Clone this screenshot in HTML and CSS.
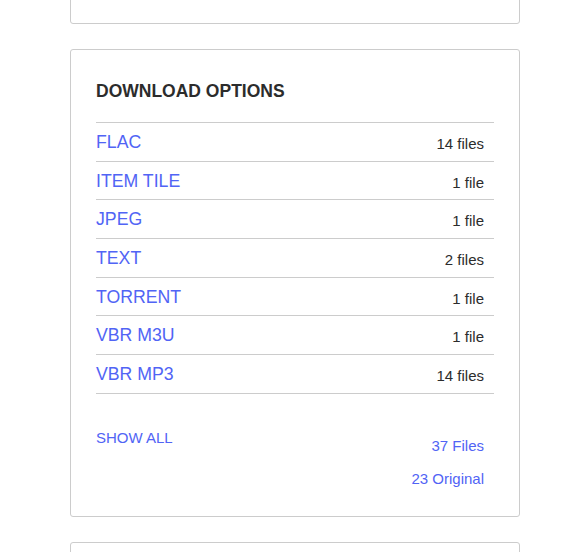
FILE: index.html
```html
<!DOCTYPE html>
<html lang="en">
<head>
  <meta charset="UTF-8">
  <title>Download Options</title>
  <link rel="stylesheet" href="styles.css">
</head>
<body>

  <div class="column">
    <!-- card above, scrolled off -->
    <div class="card card-top"></div>

    <!-- Download options -->
    <div class="card dl">
      <h3>DOWNLOAD OPTIONS</h3>
      <div class="formats">
        <div class="fmt"><a href="#">FLAC</a><span class="count">14 files</span></div>
        <div class="fmt"><a href="#">ITEM TILE</a><span class="count">1 file</span></div>
        <div class="fmt"><a href="#">JPEG</a><span class="count">1 file</span></div>
        <div class="fmt"><a href="#">TEXT</a><span class="count">2 files</span></div>
        <div class="fmt"><a href="#">TORRENT</a><span class="count">1 file</span></div>
        <div class="fmt"><a href="#">VBR M3U</a><span class="count">1 file</span></div>
        <div class="fmt"><a href="#">VBR MP3</a><span class="count">14 files</span></div>
      </div>
      <div class="dl-foot">
        <a class="show-all" href="#">SHOW ALL</a>
        <div class="totals">
          <a href="#">37 Files</a>
          <a href="#">23 Original</a>
        </div>
      </div>
    </div>

    <!-- next card -->
    <div class="card card-next"></div>
  </div>

</body>
</html>
```

FILE: styles.css
```css
body { margin: 0; background: #fff; font-family: "Liberation Sans", Arial, sans-serif; color: #2c2c2c; overflow: hidden; }
a { color: #5164f5; text-decoration: none; }
.column { width: 450px; margin-left: 70px; }
.card { border: 1px solid #ccc; border-radius: 3px; background: #fff; box-sizing: border-box; margin-bottom: 25px; }
.card-top { margin-top: -30px; height: 54px; }
.card-next { height: 60px; }

.dl { padding: 32px 25px 27px 25px; }
.dl h3 { margin: 0 0 22px; font-size: 17.5px; font-weight: bold; line-height: 18px; color: #2c2c2c; }

.formats { border-bottom: 1px solid #ccc; }
.fmt {
    display: flex;
    justify-content: space-between;
    align-items: flex-start;
    border-top: 1px solid #ccc;
    padding: 7px 10px 6.7px 0;
}
.fmt a { font-size: 17.7px; line-height: 24px; }
.count { font-size: 15px; line-height: 21px; padding-top: 3px; color: #2c2c2c; }

.dl-foot { display: flex; justify-content: space-between; align-items: flex-start; margin-top: 34px; }
.show-all { font-size: 15px; line-height: 20px; }
.totals { display: flex; flex-direction: column; align-items: flex-end; gap: 13px; margin-top: 8px; padding-right: 10px; }
.totals a { font-size: 15px; line-height: 20px; }
```
